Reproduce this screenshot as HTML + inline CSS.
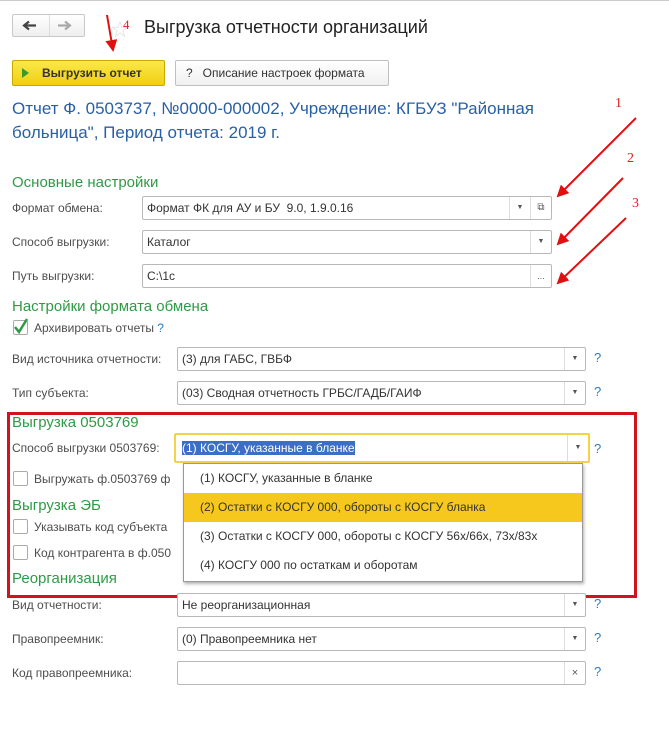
<!DOCTYPE html>
<html><head><meta charset="utf-8"><style>
body{margin:0;width:669px;height:731px;background:#fff;position:relative;overflow:hidden;font-family:"Liberation Sans","Noto Sans CJK SC",sans-serif;font-size:12px;color:#4d4d4d}
.a{position:absolute;white-space:nowrap}
.inp{position:absolute;border:1px solid #b8b8b8;border-radius:2px;background:#fff;box-sizing:border-box;color:#333;font-size:12px;line-height:22px;padding-left:4px}
.dd{position:absolute;top:0;bottom:0;right:0;width:20px;border-left:1px solid #ddd;text-align:center;font-size:7px;color:#555}
.q{position:absolute;color:#2e7bbf;font-size:13px}
.g{position:absolute;color:#2f9a46;font-size:15px;white-space:nowrap}
.cb{position:absolute;width:13px;height:13px;border:1px solid #aaa;border-radius:2px;background:#fff}
</style></head><body>
<div style="position:absolute;left:0;top:0;width:669px;height:1px;background:#ccc"></div>
<div class="a" style="left:12px;top:14px;width:73px;height:23px;border:1px solid #c8c8c8;border-radius:2px;background:linear-gradient(#fff,#eee);box-sizing:border-box"></div>
<div class="a" style="left:49px;top:15px;width:1px;height:21px;background:#ddd"></div>
<svg class="a" style="left:0;top:0" width="100" height="40">
<path d="M24,25.5H36M29,21.5L24,25.5L29,29.5" stroke="#444" stroke-width="2.2" fill="none"/>
<path d="M58,25.5H70M65,21.5L70,25.5L65,29.5" stroke="#aaa" stroke-width="2.2" fill="none"/>
</svg>
<div class="a" style="left:111px;top:16px;font-size:18px;color:#ddd">☆</div>
<div class="a" style="left:123px;top:17px;font-size:13px;color:#d22;font-family:'Liberation Serif',serif">4</div>
<div class="a" style="left:144px;top:17px;font-size:18px;color:#222">Выгрузка отчетности организаций</div>
<div class="a" style="left:12px;top:60px;width:153px;height:26px;background:linear-gradient(#fbe84a,#f0cf10);border:1px solid #c9a800;border-radius:2px;box-sizing:border-box"></div>
<div class="a" style="left:22px;top:68px;width:0;height:0;border-left:7px solid #3a9a2a;border-top:5px solid transparent;border-bottom:5px solid transparent"></div>
<div class="a" style="left:42px;top:66px;font-size:12px;font-weight:bold;color:#333">Выгрузить отчет</div>
<div class="a" style="left:175px;top:60px;width:214px;height:26px;background:linear-gradient(#fff,#f0f0f0);border:1px solid #c0c0c0;border-radius:2px;box-sizing:border-box"></div>
<div class="a" style="left:186px;top:66px;font-size:12px;color:#333">?&nbsp;&nbsp; Описание настроек формата</div>
<div class="a" style="left:12px;top:97px;font-size:17px;color:#2a5fa5;line-height:24px">Отчет Ф. 0503737, №0000-000002, Учреждение: КГБУЗ "Районная<br>больница", Период отчета: 2019 г.</div>
<div class="g" style="left:12px;top:174px">Основные настройки</div>
<div class="a" style="left:12px;top:201px">Формат обмена:</div>
<div class="inp" style="left:142px;top:196px;width:410px;height:24px">Формат ФК для АУ и БУ&nbsp; 9.0, 1.9.0.16<div class="dd" style="right:21px">▼</div><div class="dd" style="font-size:10px">⧉</div></div>
<div class="a" style="left:12px;top:235px">Способ выгрузки:</div>
<div class="inp" style="left:142px;top:230px;width:410px;height:24px">Каталог<div class="dd">▼</div></div>
<div class="a" style="left:12px;top:269px">Путь выгрузки:</div>
<div class="inp" style="left:142px;top:264px;width:410px;height:24px">C:\1c<div class="dd" style="font-size:9px">...</div></div>
<div class="g" style="left:12px;top:298px">Настройки формата обмена</div>
<div class="cb" style="left:13px;top:320px"></div>
<svg class="a" style="left:12px;top:316px" width="20" height="20"><path d="M3,11L7,16L15,3" stroke="#2f9a46" stroke-width="2.5" fill="none"/></svg>
<div class="a" style="left:34px;top:321px">Архивировать отчеты <span style="color:#2e7bbf">?</span></div>
<div class="a" style="left:12px;top:352px">Вид источника отчетности:</div>
<div class="inp" style="left:177px;top:347px;width:409px;height:24px">(3) для ГАБС, ГВБФ<div class="dd">▼</div></div><div class="q" style="left:594px;top:350px">?</div>
<div class="a" style="left:12px;top:386px">Тип субъекта:</div>
<div class="inp" style="left:177px;top:381px;width:409px;height:24px">(03) Сводная отчетность ГРБС/ГАДБ/ГАИФ<div class="dd">▼</div></div><div class="q" style="left:594px;top:384px">?</div>
<div class="g" style="left:12px;top:414px">Выгрузка 0503769</div>
<div class="a" style="left:12px;top:441px">Способ выгрузки 0503769:</div>
<div class="inp" style="left:174px;top:433px;width:416px;height:30px;border:2px solid #f2d34a;padding-left:6px;line-height:26px"><span style="background:#3c6fc4;color:#fff">(1) КОСГУ, указанные в бланке</span><div class="dd">▼</div></div><div class="q" style="left:594px;top:441px">?</div>
<div class="cb" style="left:13px;top:471px"></div><div class="a" style="left:34px;top:472px">Выгружать ф.0503769 ф</div>
<div class="g" style="left:12px;top:497px">Выгрузка ЭБ</div>
<div class="cb" style="left:13px;top:519px"></div><div class="a" style="left:34px;top:520px">Указывать код субъекта</div>
<div class="cb" style="left:13px;top:545px"></div><div class="a" style="left:34px;top:546px">Код контрагента в ф.050</div>
<div class="g" style="left:12px;top:570px">Реорганизация</div>
<div class="a" style="left:183px;top:463px;width:400px;height:119px;background:#fff;border:1px solid #999;box-shadow:1px 2px 3px rgba(0,0,0,.3);box-sizing:border-box;color:#333;font-size:12px">
<div style="height:29px;line-height:29px;padding-left:16px">(1) КОСГУ, указанные в бланке</div>
<div style="height:29px;line-height:29px;padding-left:16px;background:#f6c81e">(2) Остатки с КОСГУ 000, обороты с КОСГУ бланка</div>
<div style="height:29px;line-height:29px;padding-left:16px">(3) Остатки с КОСГУ 000, обороты с КОСГУ 56х/66х, 73х/83х</div>
<div style="height:29px;line-height:29px;padding-left:16px">(4) КОСГУ 000 по остаткам и оборотам</div>
</div>
<div class="a" style="left:7px;top:412px;width:630px;height:186px;border:3px solid #d0141e;box-sizing:border-box"></div>
<div class="a" style="left:12px;top:598px">Вид отчетности:</div>
<div class="inp" style="left:177px;top:593px;width:409px;height:24px">Не реорганизационная<div class="dd">▼</div></div><div class="q" style="left:594px;top:596px">?</div>
<div class="a" style="left:12px;top:632px">Правопреемник:</div>
<div class="inp" style="left:177px;top:627px;width:409px;height:24px">(0) Правопреемника нет<div class="dd">▼</div></div><div class="q" style="left:594px;top:630px">?</div>
<div class="a" style="left:12px;top:666px">Код правопреемника:</div>
<div class="inp" style="left:177px;top:661px;width:409px;height:24px"><div class="dd" style="font-size:11px">×</div></div><div class="q" style="left:594px;top:664px">?</div>
<div class="a" style="left:615px;top:96px;font-size:14px;color:#d22;font-family:'Liberation Serif',serif">1</div>
<div class="a" style="left:627px;top:151px;font-size:14px;color:#d22;font-family:'Liberation Serif',serif">2</div>
<div class="a" style="left:632px;top:196px;font-size:14px;color:#d22;font-family:'Liberation Serif',serif">3</div>
<svg class="a" style="left:0;top:0" width="669" height="731">
<defs><marker id="m" markerWidth="6" markerHeight="6" refX="5" refY="3" orient="auto"><path d="M0,0L6,3L0,6z" fill="#e01010"/></marker></defs>
<g stroke="#e01010" stroke-width="2" marker-end="url(#m)">
<line x1="636" y1="118" x2="558" y2="196"/>
<line x1="623" y1="178" x2="558" y2="244"/>
<line x1="626" y1="218" x2="558" y2="283"/>
<line x1="107" y1="15" x2="113" y2="50"/>
</g></svg>
</body></html>
